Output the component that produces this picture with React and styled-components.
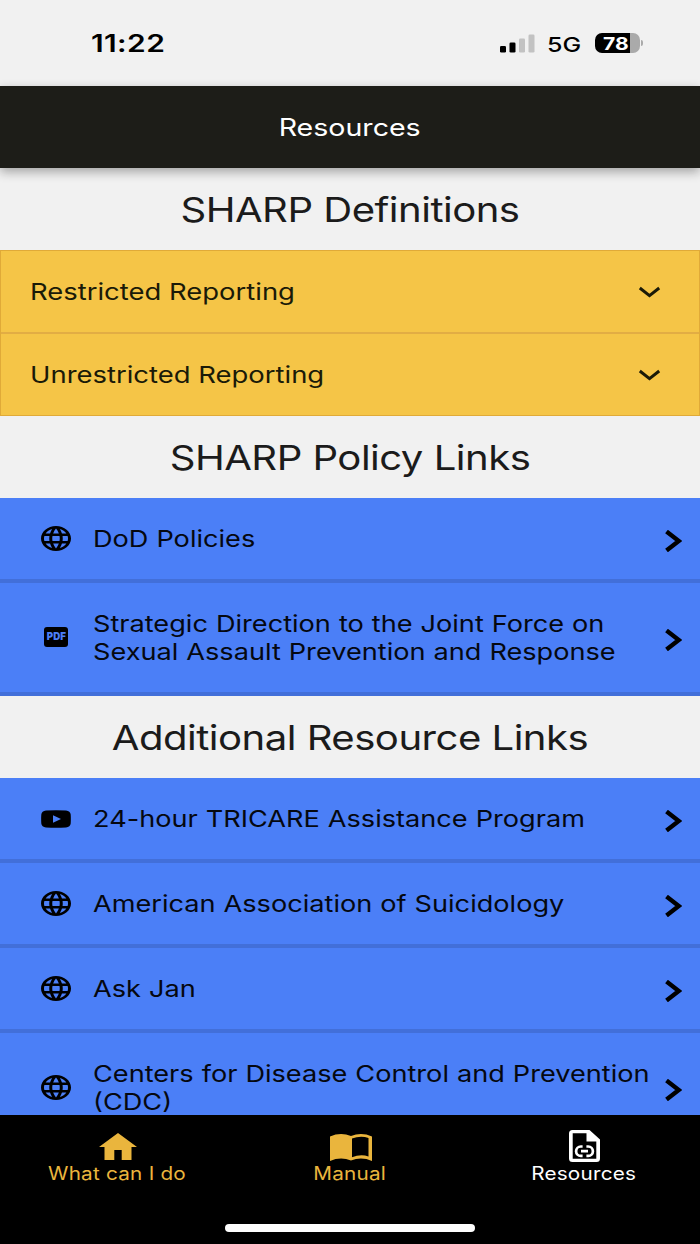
import styled, { createGlobalStyle } from 'styled-components'

const policyLinks = [
  { label: ['DoD Policies'], icon: 'globe' },
  {
    label: [
      'Strategic Direction to the Joint Force on',
      'Sexual Assault Prevention and Response',
    ],
    icon: 'pdf',
  },
]

const resourceLinks = [
  { label: ['24-hour TRICARE Assistance Program'], icon: 'video' },
  { label: ['American Association of Suicidology'], icon: 'globe' },
  { label: ['Ask Jan'], icon: 'globe' },
  {
    label: ['Centers for Disease Control and Prevention', '(CDC)'],
    icon: 'globe',
  },
]

const GlobeIcon = () => (
  <svg width='30' height='25' viewBox='2 2 20 20' preserveAspectRatio='none'>
    <path d='M11.99 2C6.47 2 2 6.48 2 12s4.47 10 9.99 10C17.52 22 22 17.52 22 12S17.52 2 11.99 2zm6.93 6h-2.95c-.32-1.25-.78-2.45-1.38-3.56 1.84.63 3.37 1.91 4.33 3.56zM12 4.04c.83 1.2 1.48 2.53 1.91 3.96h-3.82c.43-1.43 1.08-2.76 1.91-3.96zM4.26 14C4.1 13.36 4 12.69 4 12s.1-1.36.26-2h3.38c-.08.66-.14 1.32-.14 2s.06 1.34.14 2H4.26zm.82 2h2.95c.32 1.25.78 2.45 1.38 3.56-1.84-.63-3.37-1.9-4.33-3.56zm2.95-8H5.08c.96-1.66 2.49-2.93 4.33-3.56C8.81 5.55 8.35 6.75 8.03 8zM12 19.96c-.83-1.2-1.48-2.53-1.91-3.96h3.82c-.43 1.43-1.08 2.76-1.91 3.96zM14.34 14H9.66c-.09-.66-.16-1.32-.16-2s.07-1.35.16-2h4.68c.09.65.16 1.32.16 2s-.07 1.34-.16 2zm.25 5.56c.6-1.11 1.06-2.31 1.38-3.56h2.95c-.96 1.65-2.49 2.93-4.33 3.56zM16.36 14c.08-.66.14-1.32.14-2s-.06-1.34-.14-2h3.38c.16.64.26 1.31.26 2s-.1 1.36-.26 2h-3.38z' />
  </svg>
)

const VideoIcon = () => (
  <svg width='30' height='18' viewBox='0 0 30 18'>
    <path
      fillRule='evenodd'
      d='M5 .5Q15-.2 25 .5Q29.300 .9 29.700 4.500Q30 9 29.700 13.500Q29.300 17.100 25 17.500Q15 18.200 5 17.500Q.7 17.100 .3 13.500Q0 9 .3 4.500Q.7 .9 5 .5ZM12 5.200V12.800L20 9Z'
    />
  </svg>
)

const LinkIcon = ({ type }) => {
  if (type === 'pdf') {
    return (
      <PdfBadge>
        <PdfText>PDF</PdfText>
      </PdfBadge>
    )
  }
  return type === 'video' ? <VideoIcon /> : <GlobeIcon />
}

const LinkList = ({ links }) =>
  links.map((link) => (
    <LinkRow key={link.label[0]} $tall={link.label.length > 1}>
      <IconSlot>
        <LinkIcon type={link.icon} />
      </IconSlot>
      <LinkLabel>
        {link.label.map((line) => (
          <LinkLine key={line}>{line}</LinkLine>
        ))}
      </LinkLabel>
      <RowArrow width='17' height='22' viewBox='0 0 17 22'>
        <path d='M1.500 1.500L13.800 11L1.500 20.500' />
      </RowArrow>
    </LinkRow>
  ))

const Accordion = ({ title }) => (
  <AccordionRow>
    <AccordionTitle>{title}</AccordionTitle>
    <AccordionArrow width='23' height='12' viewBox='0 0 23 12'>
      <path d='M1.800 2L11.500 9.700L21.200 2' />
    </AccordionArrow>
  </AccordionRow>
)

const App = () => (
  <>
    <GlobalStyle />
    <Screen>
      <StatusBar>
        <Time>11:22</Time>
        <StatusIcons>
          <svg width='35' height='19' viewBox='0 0 35 19'>
            <rect x='0' y='12' width='6' height='6.500' rx='1.300' />
            <rect x='9.500' y='8.500' width='6' height='10' rx='1.300' />
            <rect x='19' y='4.500' width='6' height='14' rx='1.300' fill='#c2c2c2' />
            <rect x='28.500' y='.5' width='6' height='18' rx='1.300' fill='#c2c2c2' />
          </svg>
          <Network>5G</Network>
          <Battery>
            <BatteryText>78</BatteryText>
          </Battery>
          <BatteryCap />
        </StatusIcons>
      </StatusBar>
      <Header>
        <HeaderTitle>Resources</HeaderTitle>
      </Header>
      <Content>
        <SectionTitle>SHARP Definitions</SectionTitle>
        <AccordionGroup>
          <Accordion title='Restricted Reporting' />
          <Accordion title='Unrestricted Reporting' />
        </AccordionGroup>
        <SectionTitle>SHARP Policy Links</SectionTitle>
        <LinkList links={policyLinks} />
        <SectionTitle>Additional Resource Links</SectionTitle>
        <LinkList links={resourceLinks} />
      </Content>
      <TabBar>
        <Tab>
          <TabIcon>
            <svg width='38' height='27' viewBox='0 0 38 27'>
              <path d='M19 0L38 14H32.500V27H22.700V17H15.300V27H5.500V14H0Z' />
            </svg>
          </TabIcon>
          <TabLabel>What can I do</TabLabel>
        </Tab>
        <Tab>
          <TabIcon $low>
            <svg width='42' height='27' viewBox='0 0 42 27'>
              <path
                fillRule='evenodd'
                d='M0 2.500Q10.500-2 21 2Q31.500-2 42 2.500V27Q31.500 22.500 21 26.500Q10.500 22.500 0 27ZM22 4.600V23.200Q30.500 20 38.500 22.400V4Q30.500 1.200 22 4.600Z'
              />
            </svg>
          </TabIcon>
          <TabLabel>Manual</TabLabel>
        </Tab>
        <Tab $active>
          <TabIcon>
            <svg width='31' height='34' viewBox='0 0 31 34'>
              <path
                fillRule='evenodd'
                d='M3.500 0H20.500L31 9.500V28.500Q31 32 27.500 32H3.500Q0 32 0 28.500V3.500Q0 0 3.500 0ZM3.700 3.200V28.800H27.300V11.500H17.500V3.200Z'
              />
              <path
                d='M13.600 16.500H11.800A4.700 4.700 0 0 0 11.800 25.900H13.600M17.400 16.500H19.200A4.700 4.700 0 0 1 19.200 25.900H17.400M12 21.200H19'
                fill='none'
                stroke='#fff'
                strokeWidth='2.700'
              />
            </svg>
          </TabIcon>
          <TabLabel>Resources</TabLabel>
        </Tab>
        <HomeIndicator />
      </TabBar>
    </Screen>
  </>
)

export default App

const GlobalStyle = createGlobalStyle`
  * {
    box-sizing: border-box;
  }

  body {
    margin: 0;
    font-family: Inter, sans-serif;
  }

  svg {
    display: block;
    flex-shrink: 0;
  }
`

const Screen = styled.div`
  display: flex;
  flex-direction: column;
  width: 700px;
  height: 1244px;
  overflow: hidden;
  background: #f1f1f1;
`

// wide lettering used all over the app
const WideText = styled.span`
  display: block;
  width: max-content;
  white-space: nowrap;
  transform: scaleX(1.18);
  transform-origin: left center;
`

const StatusBar = styled.div`
  display: flex;
  justify-content: space-between;
  align-items: center;
  flex: none;
  height: 86px;
  padding: 0 57px 0 91px;
`

const Time = styled(WideText)`
  padding-top: 1px;
  font-size: 24px;
  font-weight: 600;
  letter-spacing: 0.3px;
  transform: scaleX(1.25);
`

const StatusIcons = styled.div`
  display: flex;
  align-items: center;
`

const Network = styled(WideText)`
  width: 48px;
  margin-left: 12px;
  padding-top: 2px;
  font-size: 20.5px;
  font-weight: 500;
  transform: scaleX(1.22);
`

const Battery = styled.div`
  display: flex;
  align-items: center;
  width: 45px;
  height: 20px;
  padding-left: 8px;
  border-radius: 7px;
  color: white;
  background: linear-gradient(to right, #000 35px, #aaa 35px);
`

const BatteryText = styled(WideText)`
  font-size: 18px;
  font-weight: 700;
  transform: scaleX(1.17);
`

const BatteryCap = styled.div`
  width: 2px;
  height: 6px;
  margin-left: 1px;
  border-radius: 0 2px 2px 0;
  background: #aaa;
`

const Header = styled.div`
  display: flex;
  justify-content: center;
  align-items: center;
  flex: none;
  height: 82px;
  color: white;
  background: #1d1d18;
  box-shadow: 0 4px 10px rgba(0, 0, 0, 0.32);
`

const HeaderTitle = styled(WideText)`
  font-size: 24px;
  transform: scaleX(1.19);
  transform-origin: center;
`

const Content = styled.div`
  flex: 1;
  min-height: 0;
  overflow: hidden;
`

const SectionTitle = styled(WideText)`
  width: 100%;
  height: 82px;
  line-height: 84px;
  font-size: 34px;
  letter-spacing: -0.45px;
  text-align: center;
  color: #1b1b1b;
  transform-origin: center;
`

const AccordionGroup = styled.div`
  border: 1px solid #e0aa38;
`

const AccordionRow = styled.div`
  display: flex;
  justify-content: space-between;
  align-items: center;
  height: 81px;
  padding: 0 38px 0 29px;
  background: #f5c547;

  & + & {
    height: 83px;
    border-top: 2px solid #e2ad44;
  }
`

const AccordionTitle = styled(WideText)`
  font-size: 23px;
  color: #1a1a08;
  transform: scaleX(1.193);
`

const AccordionArrow = styled.svg`
  margin-top: 1px;
  fill: none;
  stroke: #1a1a08;
  stroke-width: 3;
`

const LinkRow = styled.div`
  display: flex;
  align-items: center;
  height: ${({ $tall }) => ($tall ? '113px' : '85px')};
  padding: 0 18px 0 40px;
  border-bottom: 4px solid #426fd9;
  background: #4b7ff7;
`

const IconSlot = styled.div`
  display: flex;
  justify-content: center;
  width: 31px;
  padding-left: 1px;
  margin-right: 22px;
`

const LinkLabel = styled.div`
  flex: 1;
`

const LinkLine = styled(WideText)`
  font-size: 23px;
  line-height: 28px;
  word-spacing: 0.3px;
  color: #050810;
`

const RowArrow = styled.svg`
  margin-top: 4px;
  fill: none;
  stroke: black;
  stroke-width: 4.4;
`

const PdfBadge = styled.div`
  display: flex;
  justify-content: center;
  align-items: center;
  width: 24px;
  height: 20px;
  margin-top: -1px;
  border-radius: 3px;
  background: black;
`

const PdfText = styled(WideText)`
  font-size: 10.5px;
  font-weight: 900;
  line-height: 20px;
  color: #4b7ff7;
  transform: scaleX(0.92);
  transform-origin: center;
`

const TabBar = styled.div`
  display: grid;
  grid-template-columns: repeat(3, 1fr);
  grid-template-rows: 1fr auto;
  flex: none;
  height: 129px;
  padding: 14px 0 12px;
  background: black;
`

const Tab = styled.div`
  display: flex;
  flex-direction: column;
  align-items: center;
  color: ${({ $active }) => ($active ? 'white' : '#eab53d')};
  fill: currentColor;
`

const TabIcon = styled.div`
  display: flex;
  align-items: center;
  height: 35px;
  padding-top: ${({ $low }) => ($low ? '2px' : 0)};
  padding-left: 2px;
`

const TabLabel = styled(WideText)`
  font-size: 18px;
  line-height: 20px;
  letter-spacing: 0.2px;
  transform: scaleX(1.15);
  transform-origin: center;
`

const HomeIndicator = styled.div`
  grid-column: 1 / -1;
  justify-self: center;
  width: 250px;
  height: 8px;
  border-radius: 4px;
  background: white;
`
